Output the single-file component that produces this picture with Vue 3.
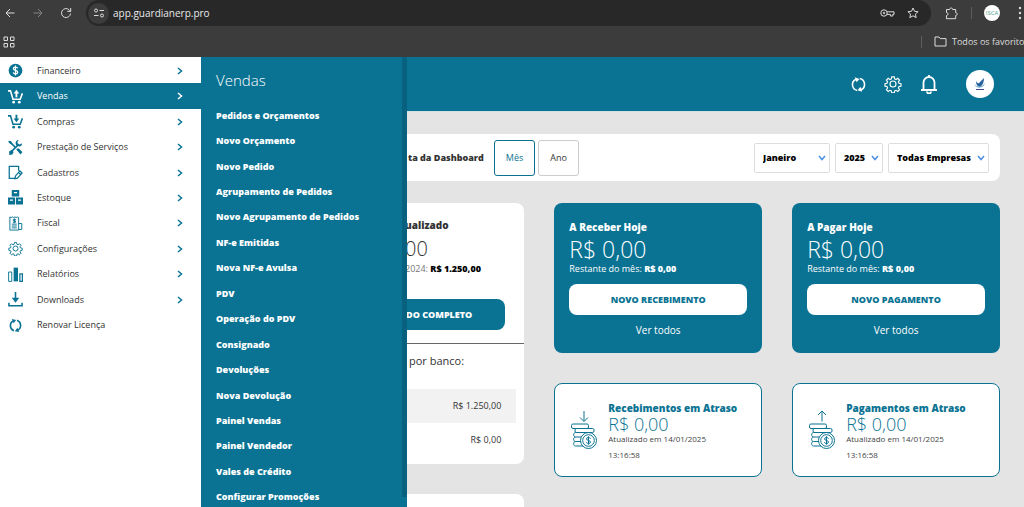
<script setup>
import { ref } from 'vue'

const active = ref('Vendas')
const period = ref('Mês')
const menu = [
  { label: 'Financeiro', icon: 'coin' },
  { label: 'Vendas', icon: 'cartUp' },
  { label: 'Compras', icon: 'cartDown' },
  { label: 'Prestação de Serviços', icon: 'tools' },
  { label: 'Cadastros', icon: 'edit' },
  { label: 'Estoque', icon: 'boxes' },
  { label: 'Fiscal', icon: 'invoice' },
  { label: 'Configurações', icon: 'gear' },
  { label: 'Relatórios', icon: 'chart' },
  { label: 'Downloads', icon: 'download' },
  { label: 'Renovar Licença', icon: 'renew', leaf: true },
]
const submenu = [
  'Pedidos e Orçamentos', 'Novo Orçamento', 'Novo Pedido', 'Agrupamento de Pedidos',
  'Novo Agrupamento de Pedidos', 'NF-e Emitidas', 'Nova NF-e Avulsa', 'PDV',
  'Operação do PDV', 'Consignado', 'Devoluções', 'Nova Devolução', 'Painel Vendas',
  'Painel Vendedor', 'Vales de Crédito', 'Configurar Promoções',
]
const filters = [
  { name: 'Período', value: 'Janeiro', size: 'month' },
  { name: 'Exercício', value: '2025', size: 'year' },
  { name: 'Empresa', value: 'Todas Empresas', size: 'company' },
]
const columns = [
  { title: 'A Receber Hoje', action: 'NOVO RECEBIMENTO', late: 'Recebimentos em Atraso', arrow: 'M14 1v10M10 7.500l4 4 4-4' },
  { title: 'A Pagar Hoje', action: 'NOVO PAGAMENTO', late: 'Pagamentos em Atraso', arrow: 'M14 11.500V1M10 5l4-4 4 4' },
]
const gear = 'M10.300 2.500h3.400l.5 2.700 1.900.8 2.300-1.600 2.400 2.400-1.600 2.300.8 1.900 2.700.5v3.400l-2.700.5-.8 1.900 1.600 2.300-2.400 2.400-2.300-1.600-1.900.8-.5 2.700h-3.400l-.5-2.700-1.900-.8-2.300 1.600-2.400-2.400 1.600-2.300-.8-1.900-2.700-.5v-3.400l2.700-.5.8-1.900-1.600-2.300 2.400-2.400 2.300 1.600 1.900-.8z'
</script>

<template>
  <div class="page">
    <header class="browser">
      <div class="toolbar">
        <button class="nav" aria-label="Voltar"><svg width="12" height="12" viewBox="0 0 12 12"><path d="M10.500 6H2M6 2 2 6l4 4" /></svg></button>
        <button class="nav dim" aria-label="Avançar"><svg width="12" height="12" viewBox="0 0 12 12"><path d="M1.500 6H10M6 2l4 4-4 4" /></svg></button>
        <button class="nav" aria-label="Recarregar"><svg width="12" height="12" viewBox="0 0 12 12"><path d="M10.500 6.500A4.500 4.500 0 1 1 9 2.700l1.500 1.500M10.700 1v3.400H7.300" /></svg></button>
        <div class="address">
          <span class="site"><svg width="12" height="12" viewBox="0 0 12 12"><circle cx="3" cy="3.500" r="1.500" /><path d="M6.500 3.500H11M1 8.500h4.500" /><circle cx="9" cy="8.500" r="1.500" /></svg></span>
          <span class="url">app.guardianerp.pro</span>
          <svg width="15" height="10" viewBox="0 0 15 10"><circle cx="4" cy="5" r="3.200" /><circle cx="4" cy="5" r=".8" /><path d="M7 3.800h7v2.600h-1.200v1.600h-2.400V6.400H7" /></svg>
          <svg width="12" height="12" viewBox="0 0 12 12"><path d="m6 1 1.500 3.300 3.600.4-2.700 2.400.8 3.500L6 8.800l-3.200 1.800.8-3.500L.9 4.700l3.600-.4z" /></svg>
        </div>
        <svg class="puzzle" width="13" height="13" viewBox="0 0 13 13"><path d="M1.500 2.500h3.200c0-2 3-2 3 0h3v3.200c2 0 2 2.800 0 2.800v3.200H1.500V8.500c2 0 2-3 0-3z" /></svg>
        <span class="bar"></span>
        <span class="profile">ISCA</span>
        <svg class="dots" width="4" height="14" viewBox="0 0 4 14"><circle cx="2" cy="2" r="1.200" /><circle cx="2" cy="7" r="1.200" /><circle cx="2" cy="12" r="1.200" /></svg>
      </div>
      <div class="bookmarks">
        <svg width="12" height="12" viewBox="0 0 12 12"><path d="M1 1h3.500v3.500H1zM7.500 1H11v3.500H7.500zM1 7.500h3.500V11H1zM7.500 7.500H11V11H7.500z" /></svg>
        <span class="bar all"></span>
        <svg width="13" height="11" viewBox="0 0 13 11"><path d="M1 1h4l1.300 1.600H12V10H1z" /></svg>
        <a href="#">Todos os favoritos</a>
      </div>
    </header>

    <div class="app">
      <nav class="sidebar" aria-label="Principal">
        <a v-for="m in menu" :key="m.label" href="#" :class="{ active: m.label === active }" @click.prevent="active = m.label">
          <svg class="icon" width="15" height="15" viewBox="0 0 24 24">
            <template v-if="m.icon === 'coin'">
              <circle class="solid" cx="12" cy="12" r="11" /><path class="cut" d="M15.500 8.500C15 7 13.500 6.500 12 6.500c-4.500 0-4.500 4.700 0 5.300 4.700.6 4.500 5.500 0 5.500-2 0-3.300-.8-3.700-2.400M12 4v16" />
            </template>
            <template v-else-if="m.icon === 'cartUp' || m.icon === 'cartDown'">
              <path class="thick" d="M0 3h4l4 13.500h11.500L23 7" /><circle class="solid" cx="9" cy="21" r="2.200" /><circle class="solid" cx="18" cy="21" r="2.200" />
              <path class="solid" :d="m.icon === 'cartUp' ? 'M12 13V7H9l4.500-6L18 7h-3v6z' : 'M12 1v6H9l4.500 6L18 7h-3V1z'" />
            </template>
            <template v-else-if="m.icon === 'tools'">
              <path class="thick" d="M2 2l9 9M14 14l7 7M3 21 17 7" /><path class="solid" d="m1 1 4 1 2 4-2 1-4-3zM14 16l3-3 6 6-3 4zM22 5l-3 2-3-1-1-3 2-3c-4 0-6 4-4 8l3 2c4 1 7-1 6-5zM2 18l4-2 3 3-2 4-5 1z" />
            </template>
            <template v-else-if="m.icon === 'edit'">
              <path class="mid" d="M11 21.500H2V2h15v7M11 22l1-4.500 7-8 3.500 3.500-7.500 8zM17 12l3.500 3.500" />
            </template>
            <template v-else-if="m.icon === 'boxes'">
              <path class="solid" d="M6 0h12v10.500H6zM0 12h11.300v11H0zM12.700 12H24v11H12.700z" /><path class="cut" d="M9.500 4h5M3 16h5M16 16h5" />
            </template>
            <template v-else-if="m.icon === 'invoice'">
              <path class="thin" d="M3 1.500l2 1 2-1 2 1 2-1 2 1 2-1 2 1v20H3zM17 12h5v9.500h-5M6 13h8M6 16h8M6 19h8M12.500 5.500h-4v2.300h3.500V10H8M10.200 4v7.500" />
            </template>
            <template v-else-if="m.icon === 'gear'"><path class="thin" :d="gear" /><circle class="thin" cx="12" cy="12" r="4" /></template>
            <template v-else-if="m.icon === 'chart'">
              <path class="thin" d="M1 8h5v15H1z" /><path class="solid" d="M9 1h7v22H9z" /><path class="mid" d="M19 11h4v12h-4z" />
            </template>
            <template v-else-if="m.icon === 'download'">
              <path class="thick" d="M12 0v13M1.500 17v5h21v-5" /><path class="solid" d="M6 9h12l-6 8z" />
            </template>
            <template v-else><path class="thick" d="M9.500 20.500A9 9 0 0 1 8 4.500M14.500 3.500a9 9 0 0 1 1.500 16" /><path class="solid" d="M6 1.500 13 3 9 8.500zM18 22.500 11 21l4-5.500z" /></template>
          </svg>
          <span>{{ m.label }}</span>
          <svg v-if="!m.leaf" class="chevron" width="6" height="8" viewBox="0 0 6 8"><path d="M1 1l3.500 3L1 7" /></svg>
        </a>
      </nav>

      <aside class="submenu">
        <h2>Vendas</h2>
        <nav aria-label="Vendas"><a v-for="s in submenu" :key="s" href="#">{{ s }}</a></nav>
        <span class="scroll"></span>
      </aside>

      <div class="content">
        <header class="topbar">
          <button aria-label="Atualizar"><svg width="15" height="17" viewBox="0 0 24 26"><path class="heavy" d="M10 22.500A9.500 9.500 0 0 1 8 4.500M14 3.500a9.500 9.500 0 0 1 2 18" /><path class="fill" d="M6 1.500 13.500 4 9 9.500zM18 24.500 10.500 22l4.500-5.500z" /></svg></button>
          <button aria-label="Configurações"><svg width="18" height="18" viewBox="0 0 24 24"><path class="thin" :d="gear" /><circle class="thin" cx="12" cy="12" r="4" /></svg></button>
          <button aria-label="Notificações"><svg width="18" height="20" viewBox="0 0 18 20"><path class="bell" d="M9 1v2M1 16h16M3.500 16V8.500a5.500 5.500 0 0 1 11 0V16M7 17.500a2 2 0 0 0 4 0" /></svg></button>
          <button class="avatar" aria-label="Conta"><svg width="14" height="14" viewBox="0 0 14 14"><path class="wing" d="M3 4c1 2 2 2.500 3 2L11 1c0 4-1 7-4 9-3-.5-4-3-4-6z" /><path class="hand" d="M1 7c2 3 8 4 11-1-1 5-8 7-11 1z" /><path class="base" d="M3 12.500h8" /></svg></button>
        </header>

        <main>
          <section class="filters">
            <strong>ta da Dashboard</strong>
            <button v-for="p in ['Mês', 'Ano']" :key="p" class="period" :class="{ chosen: p === period }" @click="period = p">{{ p }}</button>
            <div class="selects">
              <label v-for="f in filters" :key="f.name" :class="f.size">
                <select :aria-label="f.name"><option>{{ f.value }}</option></select>
                <svg width="8" height="6" viewBox="0 0 8 6"><path d="M1 1l3 3.500L7 1" /></svg>
              </label>
            </div>
          </section>

          <div class="cards">
            <div class="column">
              <section class="card balance">
                <div class="head">
                  <h3>ualizado</h3>
                  <p class="amount">00</p>
                  <p class="note">2024: <b>R$ 1.250,00</b></p>
                  <button>DO COMPLETO</button>
                </div>
                <div class="banks">
                  <p>por banco:</p>
                  <table><tbody><tr><td>R$ 1.250,00</td></tr><tr><td>R$ 0,00</td></tr></tbody></table>
                </div>
              </section>
              <section class="card next"></section>
            </div>
            <div v-for="c in columns" :key="c.title" class="column">
              <section class="card today">
                <h3>{{ c.title }}</h3>
                <p class="amount">R$ 0,00</p>
                <p class="note">Restante do mês: <b>R$ 0,00</b></p>
                <button>{{ c.action }}</button>
                <a href="#">Ver todos</a>
              </section>
              <section class="card late">
                <svg width="28" height="40" viewBox="0 0 28 40">
                  <path :d="c.arrow" />
                  <rect x="1.500" y="14" width="17" height="4.500" rx="1.500" /><rect x="5" y="18.500" width="19" height="4" rx="1.500" />
                  <path d="M13 22.500H5.500c-2.500 0-2.500 4.500 0 4.500h6M5.500 27c-2.500 0-2.500 4.500 0 4.500H11M5.500 31.500c-2.500 0-2.500 4.500 0 4.500h7.500" />
                  <circle cx="18.500" cy="30.500" r="8" /><circle cx="18.500" cy="30.500" r="5.800" />
                  <path d="M20.500 28.700c-.5-1.800-4-1.500-4 .2 0 2 4 1.200 4 3.200 0 1.800-3.500 2-4.200.1M18.500 26.300v8.400" />
                </svg>
                <div>
                  <h3>{{ c.late }}</h3>
                  <p class="amount">R$ 0,00</p>
                  <p class="stamp">Atualizado em 14/01/2025<br>13:16:58</p>
                </div>
              </section>
            </div>
          </div>
        </main>
      </div>
    </div>
  </div>
</template>

<style>
body { overflow: hidden; }
</style>

<style scoped>
* { box-sizing: border-box; margin: 0; }
.page { height: 100vh; display: flex; flex-direction: column; overflow: hidden; font: 9px/16px "Open Sans", "Noto Sans", sans-serif; color: #333; }
button { border: 0; padding: 0; background: none; font: inherit; color: inherit; cursor: pointer; }
a { color: inherit; text-decoration: none; }
svg { display: block; flex: none; fill: none; stroke: currentColor; }

.browser { flex: none; background: #3c3c3c; color: #dcdcdc; }
.toolbar { display: flex; align-items: center; height: 26px; padding: 0 2px 0 4px; }
.nav { width: 12px; margin-right: 16px; }
.nav.dim { color: #858585; }
.address { flex: 1; display: flex; align-items: center; gap: 12px; height: 26px; margin: 0 14px 0 -2px; padding: 0 12px 0 2px; border-radius: 13px; background: #282828; }
.site { display: grid; place-items: center; width: 21px; height: 21px; margin-right: -8px; border-radius: 50%; background: #3c3c3c; }
.url { flex: 1; font-size: 10px; color: #e8e8e8; }
.bar { width: 1px; height: 12px; margin: 0 12px 0 13px; background: #5d5d5d; }
.profile { width: 16px; height: 16px; border-radius: 50%; background: #fff; color: #4fa58c; font-size: 6px; text-align: center; }
.dots { margin-left: 18px; fill: currentColor; stroke: none; }
.bookmarks { display: flex; align-items: center; height: 31px; padding: 0 0 0 3px; white-space: nowrap; }
.bookmarks .all { margin-left: auto; margin-right: 12px; }
.bookmarks a { width: 72px; margin-left: 5px; }

.app { position: relative; flex: 1; min-height: 0; display: flex; }
.sidebar { flex: none; width: 201px; display: grid; grid-auto-rows: 1fr; align-content: start; height: 280px; margin-top: 1px; }
.sidebar a { display: flex; align-items: center; padding: 0 18px 0 8px; color: #333; }
.sidebar span { flex: 1; margin-left: 14px; }
.sidebar .icon, .chevron { color: #0a7393; }
.sidebar .active, .active .icon, .active .chevron { color: #fff; }
.sidebar .active { background: #0a7393; }
.solid { fill: currentColor; stroke: none; }
.thin { stroke-width: 1.500; }
.mid { stroke-width: 2; }
.thick { stroke-width: 2.500; }
.cut { stroke: #fff; stroke-width: 2; }
.chevron { stroke-width: 1.500; }

.submenu { position: absolute; z-index: 2; top: 0; bottom: 0; left: 201px; width: 206px; padding: 13px 15px 0; overflow: hidden; background: #0a7393; color: #fff; }
.submenu h2 { font-size: 15px; line-height: 20px; font-weight: 300; }
.submenu nav { display: grid; grid-auto-rows: 1fr; height: 407px; margin-top: 13px; font-weight: 800; }
.submenu a { display: flex; align-items: center; }
.scroll { position: absolute; top: 0; bottom: 10px; right: 0; width: 5px; background: #08627f; }

.content { flex: 1; min-width: 0; display: flex; flex-direction: column; background: #e4e4e4; }
.topbar { flex: none; display: flex; align-items: center; justify-content: flex-end; height: 54px; padding-right: 30px; background: #0a7393; color: #fff; }
.topbar button { margin-left: 18px; }
.heavy { stroke-width: 2.500; }
.bell { stroke-width: 1.800; }
.fill { fill: currentColor; stroke: none; }
.topbar .avatar { display: grid; place-items: center; width: 28px; height: 28px; margin-left: 28px; border-radius: 50%; background: #fff; }
.wing { fill: #29639f; stroke: none; }
.hand { fill: #6cacd0; stroke: none; }
.base { stroke: #3c4f80; }

main { padding: 22px 24px; border-top: 1px solid #d3e2e8; }
.filters { display: flex; align-items: center; height: 47px; padding: 0 11px 0 183px; border-radius: 8px; background: #fff; }
.filters strong { margin-right: 10px; font-weight: 800; white-space: nowrap; }
.period { height: 36px; margin-right: 3px; padding: 0 11px; border: 1px solid #ccc; border-radius: 3px; }
.period.chosen { border-color: #0a7393; color: #0a7393; }
.selects { display: flex; gap: 5px; margin-left: auto; }
.selects label { position: relative; }
.selects select { appearance: none; width: 100%; height: 30px; padding: 0 8px; border: 1px solid #ddd; border-radius: 2px; background: #fff; color: #000; font: 800 9px "Open Sans", sans-serif; }
.selects svg { position: absolute; top: 12px; right: 4px; color: #4a90e2; stroke-width: 1.500; pointer-events: none; }
.month { width: 76px; }
.year { width: 48px; }
.company { width: 101px; }

.cards { display: grid; grid-template-columns: 36fr 25fr 25fr; gap: 30px; margin-top: 22px; }
.column { display: flex; flex-direction: column; gap: 30px; min-width: 0; }
.card { border-radius: 8px; background: #fff; }
h3 { font-size: 10px; font-weight: 800; line-height: 16px; }
.amount { font-size: 23px; font-weight: 300; line-height: 28px; }
.note { line-height: 12px; white-space: nowrap; }
.note b { font-weight: 800; }
.card button { display: block; width: 100%; height: 31px; border-radius: 8px; font-weight: 800; white-space: nowrap; }

.head { padding: 14px 19px 13px; border-bottom: 1px solid #666; }
.head h3, .head p { padding-left: 161px; }
.head .amount { margin-top: 2px; font-size: 20px; }
.head .note { color: #777; }
.head .note b { color: #000; }
.head button { margin-top: 24px; padding-right: 33px; background: #0a7393; color: #fff; text-align: right; }
.banks { padding: 9px 8px 7px 0; }
.banks p { padding-left: 184px; font-size: 11px; }
table { width: 100%; margin-top: 20px; border-collapse: collapse; }
td { height: 34px; padding: 0 15px; text-align: right; }
tr:first-child { background: #f2f2f2; }
.next { height: 150px; }

.today { padding: 16px 15px 8px; background: #0a7393; color: #fff; }
.today button { margin-top: 9px; background: #fff; color: #0a7393; }
.today a { display: block; font-size: 10px; line-height: 30px; text-align: center; }
.late { display: flex; gap: 10px; padding: 15px 15px 13px; border: 1px solid #0a7393; color: #0a7393; }
.late svg { margin-top: 11px; }
.late > div { flex: 1; min-width: 0; }
.late h3 { line-height: 18px; white-space: nowrap; }
.late .amount { font-size: 18px; line-height: 14px; }
.stamp { color: #444; font-size: 8px; line-height: 16px; white-space: nowrap; }
</style>
